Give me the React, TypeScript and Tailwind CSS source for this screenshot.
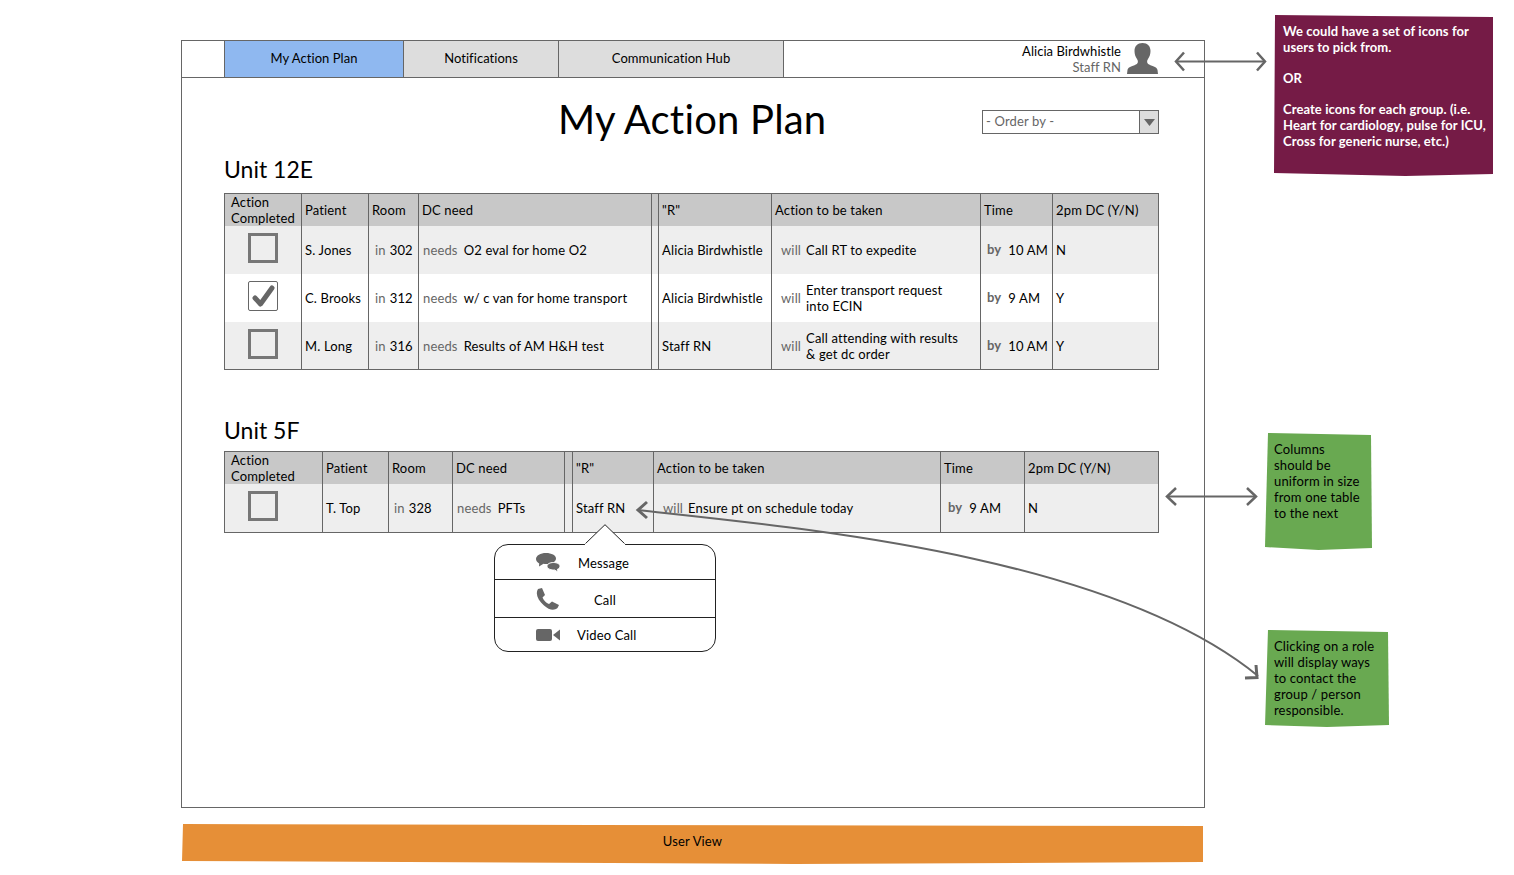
import React from 'react';

type Row = {
  done?: boolean;
  patient: string;
  room: string;
  need: string;
  role: string;
  action: React.ReactNode;
  time: string;
  dc: string;
};

const unit12: Row[] = [
  { patient: 'S. Jones', room: '302', need: 'O2 eval for home O2', role: 'Alicia Birdwhistle', action: 'Call RT to expedite', time: '10 AM', dc: 'N' },
  { done: true, patient: 'C. Brooks', room: '312', need: 'w/ c van for home transport', role: 'Alicia Birdwhistle', action: <>Enter transport request<br />into ECIN</>, time: '9 AM', dc: 'Y' },
  { patient: 'M. Long', room: '316', need: 'Results of AM H&H test', role: 'Staff RN', action: <>Call attending with results<br />& get dc order</>, time: '10 AM', dc: 'Y' },
];

const unit5: Row[] = [
  { patient: 'T. Top', room: '328', need: 'PFTs', role: 'Staff RN', action: 'Ensure pt on schedule today', time: '9 AM', dc: 'N' },
];

const headers = ['Patient', 'Room', 'DC need', '', '"R"', 'Action to be taken', 'Time', '2pm DC (Y/N)'];

const Checkbox = ({ done }: { done?: boolean }) =>
  done ? (
    <div className="w-[30px] h-[30px] mb-1 bg-white border border-[#666] rounded-[2px]">
      <svg width="28" height="28" viewBox="0 0 28 28" fill="none" stroke="#666" strokeWidth="5" strokeLinecap="round" strokeLinejoin="round">
        <path d="M6 16l5.500 6L23 6" />
      </svg>
    </div>
  ) : (
    <div className="w-[30px] h-[30px] mb-1 border-[3px] border-[#777]" />
  );

const Table = ({ rows, cols, wide }: { rows: Row[]; cols: string; wide?: boolean }) => (
  <div className={`grid border border-[#666] text-[13px] leading-4 ${cols}`}>
    <div className="h-8 bg-[#c8c8c8] pl-[6px] flex items-center">
      Action
      <br />
      Completed
    </div>
    {headers.map((h, i) => (
      <div key={i} className="h-8 bg-[#c8c8c8] border-l border-[#666] pl-[3px] flex items-center">
        {h}
      </div>
    ))}
    {rows.map((r, i) => {
      const bg = i % 2 === 0 ? 'bg-[#eeeeee]' : 'bg-white';
      const height = i === 2 ? 'h-[47px]' : 'h-12';
      const cell = `${height} border-l border-[#666] flex items-center ${bg}`;
      return (
        <React.Fragment key={r.patient}>
          <div className={`${height} pl-[23px] flex items-center ${bg}`}>
            <Checkbox done={r.done} />
          </div>
          <div className={`${cell} pl-[3px]`}>{r.patient}</div>
          <div className={`${cell} ${wide ? 'pl-[5px]' : 'pl-[6px]'}`}>
            <span className="text-[#666] mr-1">in</span>
            {r.room}
          </div>
          <div className={`${cell} pl-1`}>
            <span className="text-[#666] mr-[6px]">needs</span>
            {r.need}
          </div>
          <div className={cell} />
          <div className={`${cell} pl-[3px]`}>{r.role}</div>
          <div className={`${cell} pl-[9px]`}>
            <span className="text-[#666] mr-[5px]">will</span>
            <span>{r.action}</span>
          </div>
          <div className={`${cell} ${wide ? 'pl-[7px]' : 'pl-[6px]'}`}>
            <span className="text-[#666] font-bold mr-[7px] -mt-[2px]">by</span>
            {r.time}
          </div>
          <div className={`${cell} pl-[3px]`}>{r.dc}</div>
        </React.Fragment>
      );
    })}
  </div>
);

const CommentsIcon = () => (
  <svg width="24" height="19" viewBox="0 0 24 19" fill="#666">
    <path d="M10 0C4.500 0 0 2.600 0 6c0 1.800 1.300 3.400 3.200 4.500L3 13.500l4.500-2.700c.8.100 1.600.2 2.500.2 5.500 0 10-2.300 10-5.500S15.500 0 10 0z" />
    <path d="M17.500 9.500c3.600 0 6.500 1.500 6.500 3.700 0 1.300-1 2.400-2.500 3l.5 2.800-3.700-2.100c-.3 0-.5.1-.8.1-3.600 0-6.500-1.600-6.500-3.800s2.900-3.700 6.500-3.700z" stroke="white" strokeWidth="1" />
  </svg>
);

const PhoneIcon = () => (
  <svg width="24" height="22" viewBox="0 0 24 22" fill="#666" className="-ml-px">
    <path d="M3 1L7 0l3 7-2.500 2.500C9 12.500 11 15 14 16l3-2.500L24 17l-1.500 3C19 23 14 22 9 17.500 3 12 0 6 3 1z" />
  </svg>
);

const VideoIcon = () => (
  <svg width="24" height="12" viewBox="0 0 24 12" fill="#666">
    <rect width="16" height="12" rx="2" />
    <path d="M17 6l7-5.500v11z" />
  </svg>
);

const PersonIcon = () => (
  <svg width="31" height="31" viewBox="0 0 31 31" fill="#666" className="mb-[2px]">
    <path d="M15.500 0c-5 0-8 3-8 8 0 3 1 6 2.500 8 .7 1 1 2 .9 3-.2 1.500-1.400 2.500-3.400 3.200C3.500 23.500.8 24.500.5 27L0 31h31l-.5-4c-.3-2.500-3-3.500-7-4.800-2-.7-3.200-1.700-3.400-3.200-.1-1 .2-2 .9-3 1.500-2 2.500-5 2.500-8 0-5-3-8-8-8z" />
  </svg>
);

const Popup = () => (
  <div className="absolute left-[270px] top-[73px] w-[222px] text-[13px]">
    <svg width="42" height="21" viewBox="0 0 42 21" className="block ml-[90px] -mb-px relative z-10">
      <path d="M0.500 20.500 L21 0.700 L41.500 20.500" fill="white" stroke="#222" />
      <path d="M1 20.500 H41" stroke="white" strokeWidth="2" />
    </svg>
    <div className="h-[108px] bg-white border border-[#222] rounded-[14px] flex flex-col">
      <div className="h-[35px] border-b border-[#222] flex items-center pl-[41px]">
        <CommentsIcon />
        <span className="ml-[18px] pt-1">Message</span>
      </div>
      <div className="h-[38px] border-b border-[#222] flex items-center pl-[41px]">
        <PhoneIcon />
        <span className="ml-[35px] pt-1">Call</span>
      </div>
      <div className="flex-1 flex items-center pl-[41px]">
        <VideoIcon />
        <span className="ml-[17px] pt-[2px]">Video Call</span>
      </div>
    </div>
  </div>
);

const Arrows = () => (
  <svg width="1514" height="875" viewBox="0 0 1514 875" className="absolute inset-0 pointer-events-none" fill="none" stroke="#666" strokeWidth="2">
    <path d="M1176 61.500H1265" />
    <path d="M1184 52.500l-8 9 8 9M1257 52.500l8 9-8 9" strokeWidth="2.500" />
    <path d="M1167 496.500H1256" />
    <path d="M1176 488l-9 8.500 9 8.500M1247 488l9 8.500-9 8.500" strokeWidth="2.500" />
    <path d="M637 510C800 528 1110 555 1258 676" />
    <path d="M647 502l-9 8 9 8" strokeWidth="3" />
    <path d="M1256 665l1 12.500-12 .5" strokeWidth="3" />
  </svg>
);

export default function App() {
  return (
    <div className="relative w-[1514px] h-[875px] overflow-hidden bg-white pt-10 pl-[181px] text-black font-[Lato,sans-serif] tracking-[0.15px]">
      <div className="w-[1024px] h-[768px] border border-[#666]">
        <div className="h-[37px] border-b border-[#666] flex text-[13px] tracking-[0.05px]">
          <div className="ml-[42px] w-[180px] bg-[#8fb8f0] border-x border-[#666] flex items-center justify-center">My Action Plan</div>
          <div className="w-[155px] bg-[#dddddd] border-r border-[#666] flex items-center justify-center">Notifications</div>
          <div className="w-[225px] bg-[#dddddd] border-r border-[#666] flex items-center justify-center">Communication Hub</div>
          <div className="flex-1 flex items-center justify-end pr-[46px]">
            <div className="text-right leading-4 mr-[6px]">
              <div>Alicia Birdwhistle</div>
              <div className="text-[#666]">Staff RN</div>
            </div>
            <PersonIcon />
          </div>
        </div>

        <div className="pl-[42px] w-[977px]">
          <div className="h-[76px] flex items-start justify-between">
            <h1 className="ml-[334px] mt-[17px] text-[40px] leading-12 tracking-[0.2px]">My Action Plan</h1>
            <div className="mt-8 w-[177px] h-6 border border-[#666] flex text-[13px] text-[#666]">
              <div className="flex-1 pl-[3px] leading-[21px]">- Order by -</div>
              <div className="w-[19px] bg-[#dddddd] border-l border-[#666] flex items-center justify-center">
                <svg width="11" height="7" viewBox="0 0 11 7" fill="#666"><path d="M0 0h11L5.500 7z" /></svg>
              </div>
            </div>
          </div>
          <h2 className="text-[23px] leading-[30px] mb-[9px] tracking-normal">Unit 12E</h2>
          <Table rows={unit12} cols="grid-cols-[76px_67px_50px_233px_7px_113px_209px_72px_106px]" />
          <h2 className="text-[23px] leading-[30px] mt-[45px] mb-[6px] tracking-normal">Unit 5F</h2>
          <div className="relative">
            <Table wide rows={unit5} cols="grid-cols-[97px_66px_64px_112px_8px_81px_287px_84px_134px]" />
            <Popup />
          </div>
        </div>
      </div>

      <div className="mt-4 ml-px w-[1021px] h-10 pb-1 bg-[#e68f37] flex items-center justify-center text-[13px] [clip-path:polygon(1px_0,40%_1px,100%_2px,100%_38px,60%_100%,0_37px)]">
        User View
      </div>

      <div className="absolute left-[1274px] top-[15px] w-[219px] h-[161px] bg-[#751b46] text-white font-bold text-[13px] leading-4 pl-[9px] pt-2 tracking-[0.08px] [clip-path:polygon(1px_0,45%_1px,100%_2px,100%_159px,60%_100%,0_158px)]">
        We could have a set of icons for
        <br />
        users to pick from.
        <div className="h-[15px]" />
        OR
        <div className="h-[15px]" />
        Create icons for each group. (i.e.
        <br />
        Heart for cardiology, pulse for ICU,
        <br />
        Cross for generic nurse, etc.)
      </div>
      <div className="absolute left-[1265px] top-[433px] w-[107px] h-[118px] bg-[#69a951] text-[13px] leading-4 pl-[9px] pt-2 [clip-path:polygon(3px_0,106px_2px,107px_115px,50%_117px,0_114px)]">
        Columns
        <br />
        should be
        <br />
        uniform in size
        <br />
        from one table
        <br />
        to the next
      </div>
      <div className="absolute left-[1265px] top-[630px] w-[124px] h-[98px] bg-[#69a951] text-[13px] leading-4 pl-[9px] pt-2 [clip-path:polygon(3px_0,123px_2px,100%_95px,50%_97px,0_95px)]">
        Clicking on a role
        <br />
        will display ways
        <br />
        to contact the
        <br />
        group / person
        <br />
        responsible.
      </div>

      <Arrows />
    </div>
  );
}
